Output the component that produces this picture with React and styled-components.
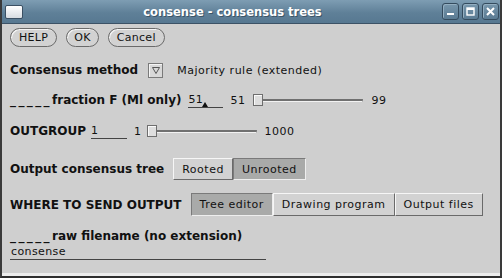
import React from "react";
import styled, { createGlobalStyle } from "styled-components";

const GlobalStyle = createGlobalStyle`
  body {
    margin: 0;
    background: #d0d0d0;
    font-family: "DejaVu Sans", "Liberation Sans", sans-serif;
  }
`;

const Window = styled.div`
  width: 502px;
  height: 278px;
  box-sizing: border-box;
  display: flex;
  flex-direction: column;
  background: #cfcfcf;
  border-left: 2px solid #3a3a3a;
  border-right: 2px solid #3a3a3a;
  border-bottom: 2px solid #2e2e2e;
  overflow: hidden;
`;

const TitleBar = styled.div`
  height: 23px;
  flex: none;
  display: flex;
  align-items: center;
  padding: 0 3px 0 3px;
  background: linear-gradient(#7e9db3, #5f8098 55%, #577891);
  border-bottom: 1px solid #3c5266;
  margin: 0 -2px;
  gap: 3px;
`;

const WinIcon = styled.div`
  width: 16px;
  height: 12px;
  margin-left: 2px;
  background: linear-gradient(#ffffff, #d8dde2);
  border: 1px solid #3b5063;
  border-radius: 2px;
`;

const Title = styled.div`
  flex: 1;
  text-align: center;
  color: #ffffff;
  font-weight: bold;
  font-size: 11.5px;
  text-shadow: 1px 1px 0 #3d5567;
`;

const TitleBtn = styled.div`
  width: 17px;
  height: 17px;
  box-sizing: border-box;
  border: 1px solid #344b5e;
  border-radius: 3px;
  background: linear-gradient(#7796ac, #5a7b93);
  box-shadow: inset 1px 1px 0 #93aec0;
  display: flex;
  align-items: center;
  justify-content: center;
`;

const Body = styled.div`
  flex: 1;
  display: flex;
  flex-direction: column;
  padding: 0 0 0 8px;
  border-bottom: 3px solid #ececec;
`;

const Row = styled.div`
  display: flex;
  align-items: center;
  height: ${p => p.$h || 18}px;
  margin-top: ${p => p.$mt || 0}px;
`;

const PillButton = styled.button`
  height: 19px;
  padding: 0 ${p => p.$px || 8}px;
  margin-right: ${p => p.$mr || 0}px;
  border: 1px solid #6a6a6a;
  border-radius: 10px;
  background: #d2d2d2;
  box-shadow: inset 1px 1px 0 #f4f4f4;
  font-family: "DejaVu Sans", sans-serif;
  font-size: 11px;
  letter-spacing: 0.3px;
  color: #111;
`;

const Label = styled.span`
  font-weight: bold;
  font-size: 12px;
  color: #111;
  margin-right: ${p => p.$mr || 0}px;
`;

const Blanks = styled.span`
  letter-spacing: 2.4px;
`;

const Text = styled.span`
  font-size: 11px;
  letter-spacing: 0.5px;
  color: #111;
  margin-right: ${p => p.$mr || 0}px;
`;

const DropBox = styled.div`
  width: 15px;
  height: 15px;
  margin-right: 14px;
  box-sizing: border-box;
  border: 1px solid #7a7a7a;
  background: #d8d8d8;
  box-shadow: inset 1px 1px 0 #f5f5f5;
  display: flex;
  align-items: center;
  justify-content: center;
`;

const Field = styled.div`
  position: relative;
  width: ${p => p.$w}px;
  height: 15px;
  box-sizing: border-box;
  border-bottom: 1px solid #444;
  font-size: 11px;
  letter-spacing: 0.4px;
  line-height: 14px;
  color: #111;
  margin-right: ${p => p.$mr || 0}px;
  padding-left: ${p => p.$pl || 0}px;
`;

const Caret = styled.span`
  position: absolute;
  left: 14px;
  bottom: 0;
  width: 0;
  height: 0;
  border-left: 3px solid transparent;
  border-right: 3px solid transparent;
  border-bottom: 5px solid #111;
`;

const Slider = styled.div`
  display: flex;
  align-items: center;
  width: ${p => p.$w}px;
  margin-right: ${p => p.$mr || 0}px;
`;

const Thumb = styled.div`
  width: 10px;
  height: 12px;
  box-sizing: border-box;
  border: 1px solid #6e6e6e;
  background: #dedede;
  box-shadow: inset 1px 1px 0 #fafafa;
  flex: none;
`;

const Track = styled.div`
  flex: 1;
  height: 3px;
  box-sizing: border-box;
  border-top: 2px solid #707070;
  border-bottom: 1px solid #f2f2f2;
  border-right: 1px solid #8a8a8a;
  background: #9a9a9a;
`;

const Toggle = styled.div`
  display: flex;
`;

const ToggleBtn = styled.div`
  height: ${p => p.$h || 22}px;
  box-sizing: border-box;
  padding: 0 8px;
  display: flex;
  align-items: center;
  font-size: 11px;
  letter-spacing: 0.5px;
  color: #111;
  border-top: 1px solid ${p => (p.$on ? "#7a7a7a" : "#f6f6f6")};
  border-left: 1px solid ${p => (p.$on ? "#7a7a7a" : "#f6f6f6")};
  border-right: 1px solid ${p => (p.$on ? "#eeeeee" : "#6a6a6a")};
  border-bottom: 1px solid ${p => (p.$on ? "#eeeeee" : "#6a6a6a")};
  background: ${p => (p.$on ? "#a9aaa9" : "#d2d2d2")};
`;

export default function App() {
  return (
    <>
      <GlobalStyle />
      <Window>
        <TitleBar>
          <WinIcon />
          <Title>consense - consensus trees</Title>
          <TitleBtn>
            <svg width="9" height="9" viewBox="0 0 9 9">
              <rect x="1" y="6" width="7" height="2" fill="#fff" />
            </svg>
          </TitleBtn>
          <TitleBtn>
            <svg width="9" height="9" viewBox="0 0 9 9">
              <rect x="1" y="1" width="7" height="7" fill="none" stroke="#fff" strokeWidth="1.4" />
              <rect x="1" y="1" width="7" height="2" fill="#fff" />
            </svg>
          </TitleBtn>
          <TitleBtn>
            <svg width="9" height="9" viewBox="0 0 9 9">
              <path d="M1 1 L8 8 M8 1 L1 8" stroke="#fff" strokeWidth="2" />
            </svg>
          </TitleBtn>
        </TitleBar>
        <Body>
          <Row $h={19} $mt={4}>
            <PillButton $mr={9}>HELP</PillButton>
            <PillButton $mr={9} $px={7}>OK</PillButton>
            <PillButton>Cancel</PillButton>
          </Row>
          <Row $mt={14}>
            <Label $mr={10}>Consensus method</Label>
            <DropBox>
              <svg width="8" height="7" viewBox="0 0 8 7">
                <path d="M0.5 0.5 L7.5 0.5 L4 6.5 Z" fill="none" stroke="#555" strokeWidth="1" />
              </svg>
            </DropBox>
            <Text>Majority rule (extended)</Text>
          </Row>
          <Row $mt={12}>
            <Label $mr={7}><Blanks>_____</Blanks>fraction F (Ml only)</Label>
            <Field $w={35} $mr={7}>
              51
              <Caret />
            </Field>
            <Text $mr={8}>51</Text>
            <Slider $w={110} $mr={8}>
              <Thumb />
              <Track />
            </Slider>
            <Text>99</Text>
          </Row>
          <Row $mt={13}>
            <Label $mr={5}>OUTGROUP</Label>
            <Field $w={36} $mr={7}>1</Field>
            <Text $mr={6}>1</Text>
            <Slider $w={110} $mr={7}>
              <Thumb />
              <Track />
            </Slider>
            <Text>1000</Text>
          </Row>
          <Row $h={22} $mt={18}>
            <Label $mr={9}>Output consensus tree</Label>
            <Toggle>
              <ToggleBtn>Rooted</ToggleBtn>
              <ToggleBtn $on>Unrooted</ToggleBtn>
            </Toggle>
          </Row>
          <Row $h={23} $mt={13}>
            <Label $mr={9}>WHERE TO SEND OUTPUT</Label>
            <Toggle>
              <ToggleBtn $h={23} $on>Tree editor</ToggleBtn>
              <ToggleBtn $h={23}>Drawing program</ToggleBtn>
              <ToggleBtn $h={23}>Output files</ToggleBtn>
            </Toggle>
          </Row>
          <Row $h={16} $mt={12}>
            <Label><Blanks>_____</Blanks>raw filename (no extension)</Label>
          </Row>
          <Row $h={16}>
            <Field $w={256} $pl={1}>consense</Field>
          </Row>
        </Body>
      </Window>
    </>
  );
}
